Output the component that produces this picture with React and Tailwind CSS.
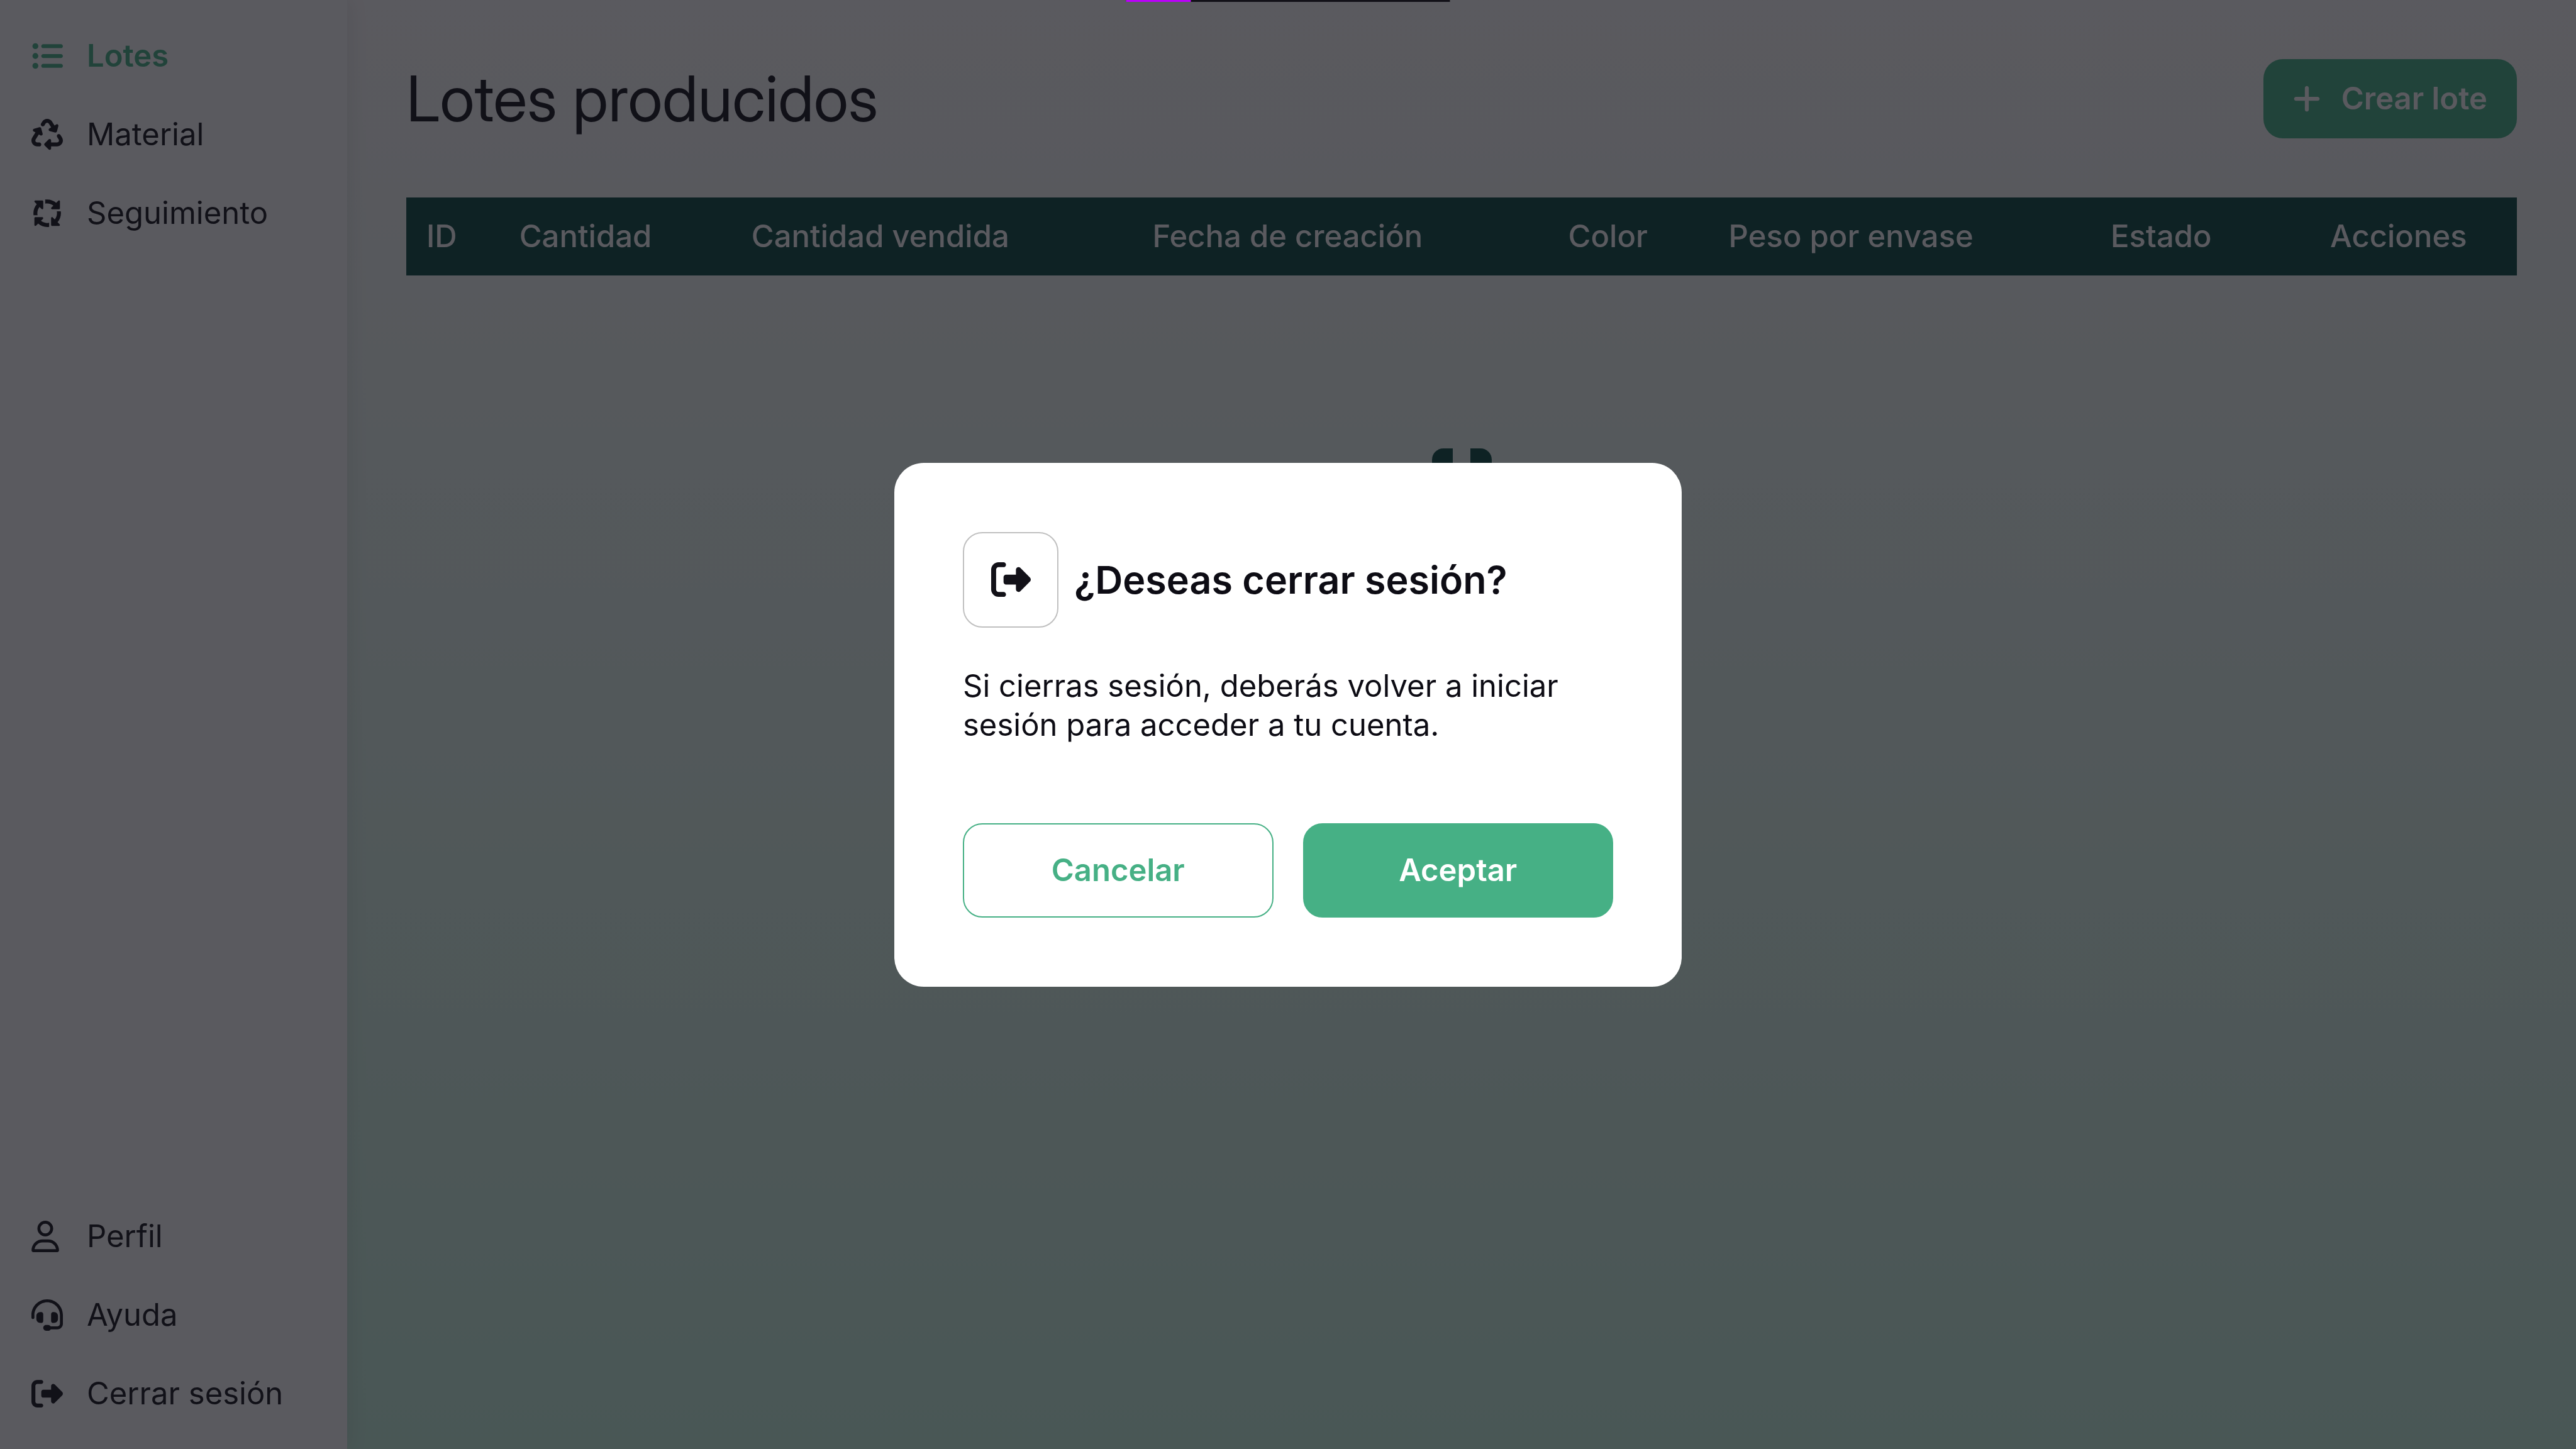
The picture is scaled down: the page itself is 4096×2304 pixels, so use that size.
import {
  FaArrowsSpin,
  FaHeadset,
  FaListUl,
  FaPlus,
  FaRecycle,
  FaRegUser,
  FaRightFromBracket,
} from "react-icons/fa6";

const mainLinks = [
  { label: "Lotes", Icon: FaListUl, active: true },
  { label: "Material", Icon: FaRecycle },
  { label: "Seguimiento", Icon: FaArrowsSpin },
];

const accountLinks = [
  { label: "Perfil", Icon: FaRegUser, narrow: true },
  { label: "Ayuda", Icon: FaHeadset },
  { label: "Cerrar sesión", Icon: FaRightFromBracket },
];

const columns = [
  { label: "ID", width: "w-[4.4%]" },
  { label: "Cantidad", width: "w-[11%]" },
  { label: "Cantidad vendida", width: "w-[19%]" },
  { label: "Fecha de creación", width: "w-[19.7%]" },
  { label: "Color", width: "w-[7.6%]" },
  { label: "Peso por envase", width: "w-[18.1%]" },
  { label: "Estado", width: "w-[10.4%]" },
  { label: "Acciones", width: "w-[9.8%]" },
];

function NavList({ items }) {
  return (
    <ul>
      {items.map(({ label, Icon, active, narrow }) => (
        <li key={label}>
          <a
            href="#"
            aria-current={active ? "page" : undefined}
            className={`flex items-center gap-[38px] px-[24px] py-[32px] leading-[61px] ${
              active ? "font-semibold text-[#46b085]" : "text-[#121118]"
            }`}
          >
            <span className="flex w-[50px] shrink-0">
              <Icon className={narrow ? "h-[50px] w-[44px]" : "size-[50px]"} />
            </span>
            {label}
          </a>
        </li>
      ))}
    </ul>
  );
}

function Loader() {
  return (
    <div role="status" aria-label="Cargando" className="mx-auto mt-[275px] grid size-[95px] grid-cols-2 gap-[28px]">
      <span className="rounded-tl-[18px] bg-[#08483f]" />
      <span className="rounded-tr-[18px] bg-[#08483f]" />
      <span className="rounded-bl-[18px] bg-[#08483f]" />
      <span className="rounded-br-[18px] bg-[#08483f]" />
    </div>
  );
}

function LogoutDialog() {
  return (
    <div
      role="dialog"
      aria-modal="true"
      aria-labelledby="logout-title"
      className="w-[1252px] rounded-[47px] bg-white px-[109px] py-[110px] text-[#0d0c14]"
    >
      <div className="flex items-center gap-[25px]">
        <span className="flex size-[152px] shrink-0 items-center justify-center rounded-[31px] border-2 border-[#c0c0c0]">
          <FaRightFromBracket className="size-[63px] text-[#121118]" />
        </span>
        <h2 id="logout-title" className="text-[61px] leading-[76px] font-semibold">
          ¿Deseas cerrar sesión?
        </h2>
      </div>
      <p className="mt-[62px] leading-[62px]">
        Si cierras sesión, deberás volver a iniciar sesión para acceder a tu cuenta.
      </p>
      <div className="mt-[125px] grid grid-cols-2 gap-[47px] leading-[62px] font-semibold">
        <button type="button" className="rounded-[31px] border-2 border-[#46b085] py-[42px] text-[#46b085]">
          Cancelar
        </button>
        <button type="button" className="rounded-[31px] border-2 border-[#46b085] bg-[#46b085] py-[42px] text-white">
          Aceptar
        </button>
      </div>
    </div>
  );
}

export default function App() {
  return (
    <div className="flex min-h-screen bg-linear-to-b from-[#fcfafa] to-[#c5f0dc] font-['Inter',sans-serif] text-[49px] text-[#121118]">
      <nav className="flex w-[552px] shrink-0 flex-col justify-between bg-[#fcfafa] p-[26px] shadow-[0_0_32px_rgba(0,0,0,0.1)]">
        <NavList items={mainLinks} />
        <NavList items={accountLinks} />
      </nav>

      <main className="min-w-0 flex-1 p-[94px]">
        <header className="flex items-center justify-between">
          <h1 className="font-['Inter_Display','Inter',sans-serif] text-[100px] leading-[124px]">Lotes producidos</h1>
          <button
            type="button"
            className="flex items-center gap-[33px] rounded-[31px] bg-[#46b085] px-[47px] py-[32px] leading-[62px] font-semibold text-[#fcfafa]"
          >
            <FaPlus className="h-[50px] w-[44px]" />
            Crear lote
          </button>
        </header>

        <table className="mt-[94px] w-full table-fixed bg-[#08483f] text-left text-[#fcfafa]">
          <thead>
            <tr>
              {columns.map(({ label, width }) => (
                <th
                  key={label}
                  scope="col"
                  className={`${width} px-[32px] py-[31px] leading-[62px] font-medium whitespace-nowrap`}
                >
                  {label}
                </th>
              ))}
            </tr>
          </thead>
        </table>

        <Loader />
      </main>

      <div className="fixed inset-0 flex items-center justify-center bg-[#121118]/69">
        <LogoutDialog />
      </div>

      <div className="fixed top-0 left-1/2 h-[3px] w-[515px] -translate-x-1/2 bg-[#121118]">
        <div className="h-full w-1/5 bg-[#bb00fa]" />
      </div>
    </div>
  );
}
